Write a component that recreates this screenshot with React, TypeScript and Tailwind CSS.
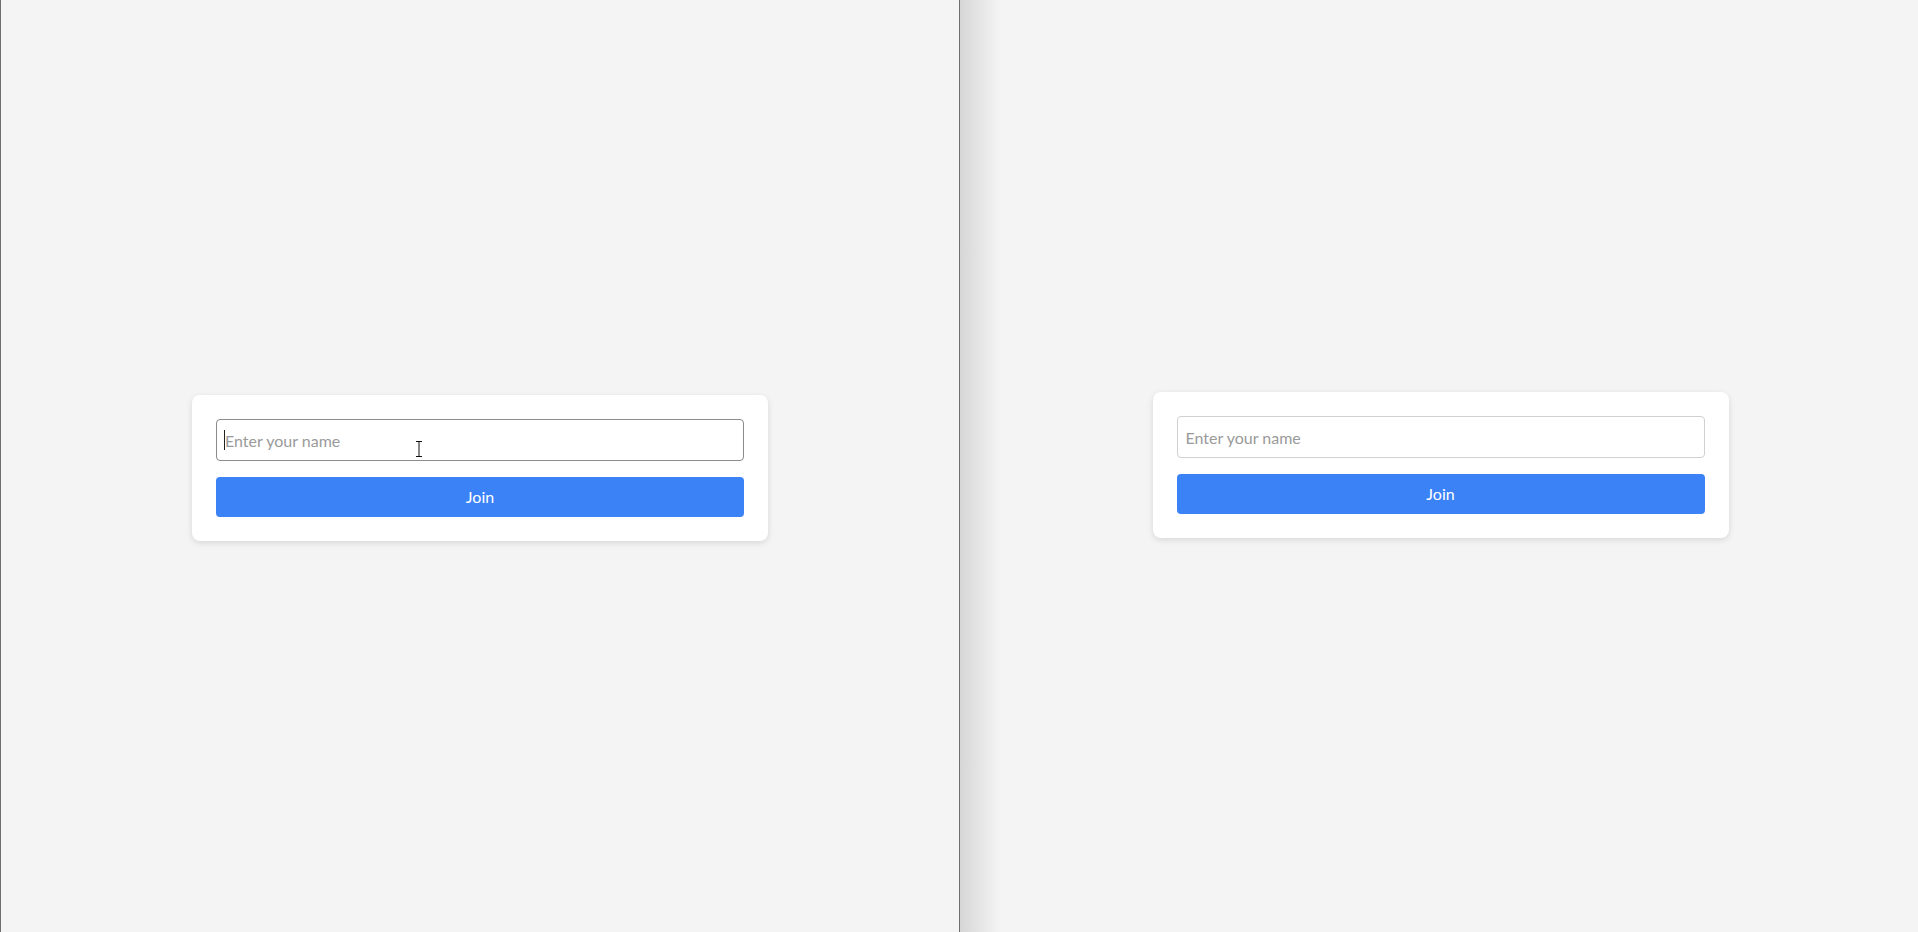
import type { ReactNode } from 'react';

const FONT = "font-['Lato','Noto_Sans',sans-serif]";

function JoinCard({ focused, children }: { focused?: boolean; children?: ReactNode }) {
  return (
    <div className="w-[576px] rounded-lg bg-white p-6 shadow-[0_2px_6px_rgba(0,0,0,0.12)]">
      <div className="relative">
        <input
          className={`block h-[42px] w-full rounded-[4px] border bg-white px-2 text-[16px] text-gray-800 outline-none placeholder:text-[#9a9a9a] ${
            focused ? 'border-[#8c8c8c]' : 'border-[#d0d0d0]'
          }`}
          placeholder="Enter your name"
          readOnly
          type="text"
        />
        {children}
      </div>
      <button
        className="mt-4 flex h-10 w-full items-center justify-center rounded-[4px] bg-[#3b82f6] text-[16px] text-white"
        type="button"
      >
        Join
      </button>
    </div>
  );
}

function IBeam() {
  return (
    <svg
      aria-hidden
      className="absolute left-[199px] top-[22px] h-[16px] w-[8px]"
      viewBox="0 0 8 16"
    >
      <path d="M1 0.5h6M1 15.5h6M4 0.5v15" fill="none" stroke="#111" strokeWidth="1" />
    </svg>
  );
}

export default function App() {
  return (
    <div className={`flex h-[932px] w-full overflow-hidden bg-[#f4f4f4] ${FONT}`}>
      <section className="flex w-[960px] shrink-0 items-center justify-center border-x border-[#6e6e6e] pt-[4px]">
        <JoinCard focused>
          <span className="absolute left-[8px] top-[11px] h-[20px] w-px bg-[#222]" />
          <IBeam />
        </JoinCard>
      </section>
      <section className="relative flex flex-1 items-center justify-center pb-[2px] pl-[3px]">
        <div className="absolute inset-y-0 left-0 w-[40px] bg-gradient-to-r from-[#d6d6d6] to-[#f4f4f4]/0" />
        <JoinCard />
      </section>
    </div>
  );
}
